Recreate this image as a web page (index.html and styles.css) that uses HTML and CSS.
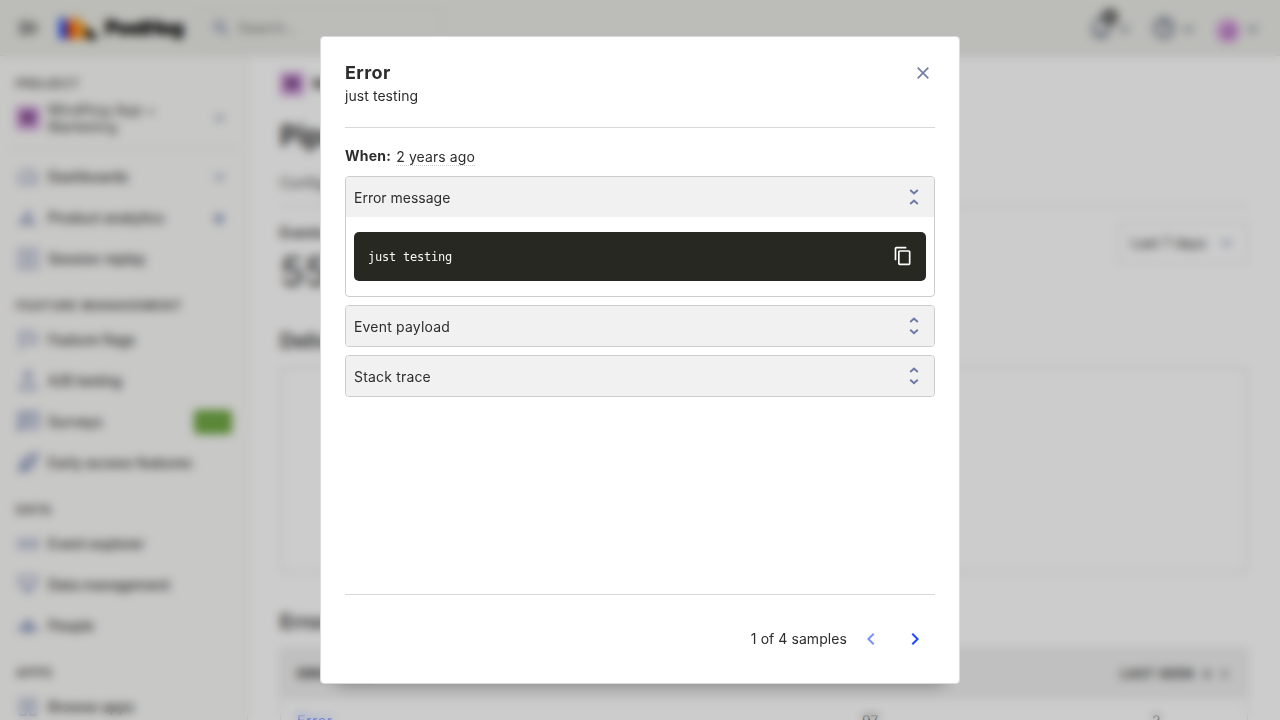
FILE: index.html
```html
<!DOCTYPE html>
<html lang="en">
<head>
<meta charset="utf-8">
<title>PostHog</title>
<link rel="stylesheet" href="styles.css">
</head>
<body>
<div class="app">
  <header class="topbar">
    <svg class="menu" width="20" height="20" viewBox="0 0 20 20"><path d="M1 5h13M1 10h13M1 15h13M19 6l-4 4 4 4" stroke="#2d2d2d" stroke-width="2" fill="none"/></svg>
    <svg class="hog" width="40" height="22" viewBox="0 0 40 22"><path d="M0 0l8 8v14H0z" fill="#1d4aff"/><path d="M0 0h8v22H3z" fill="#1d4aff" opacity=".5"/><path d="M8 0l8 8v14H8z" fill="#f54e00"/><path d="M14 0h4l10 10v12H16z" fill="#f9a02b"/><path d="M27 9l12 11v2H27z" fill="#111"/></svg>
    <span class="brand">PostHog</span>
    <div class="search"><svg width="18" height="18" viewBox="0 0 18 18" fill="none" stroke="#6b7aa8" stroke-width="2"><circle cx="7" cy="7" r="4.5"/><path d="M10.5 10.5L16 16"/></svg><span>Search…</span></div>
    <div class="tools">
      <div class="tool bell"><svg width="24" height="24" viewBox="0 0 24 24" fill="none" stroke="#5a6480" stroke-width="2.4"><path d="M3 18h18M5 18v-8a7 7 0 0114 0v8M9 21h6"/></svg><b class="count">4</b><i class="caret"></i></div>
      <div class="tool"><svg width="24" height="24" viewBox="0 0 24 24" fill="none" stroke="#5a6480" stroke-width="2.4"><circle cx="12" cy="12" r="9.5"/><path d="M9 9a3 3 0 116 1c0 2-3 2-3 4M12 16v2"/></svg><i class="caret"></i></div>
      <div class="tool"><span class="avatar">J</span><i class="caret"></i></div>
    </div>
  </header>
  <div class="body">
    <nav class="side">
      <div class="group first">PROJECT</div>
      <div class="item project"><span class="tile">M</span><span>MindHog App + Marketing</span><i class="caret"></i></div>
      <div class="rule"></div>
      <div class="item"><svg viewBox="0 0 24 24"><path d="M4 18a9 9 0 1116 0zM12 15l3-5"/></svg><span>Dashboards</span><i class="caret"></i></div>
      <div class="item"><svg viewBox="0 0 24 24"><path d="M6 19v-6M12 19V5M18 19v-4" stroke-width="4"/></svg><span>Product analytics</span><i class="plus">+</i></div>
      <div class="item"><svg viewBox="0 0 24 24"><path d="M3 3h18v18H3zM10 8l6 4-6 4z"/></svg><span>Session replay</span></div>
      <div class="group">FEATURE MANAGEMENT</div>
      <div class="item"><svg viewBox="0 0 24 24"><path d="M5 22V4h8l1 2h6v9h-7l-1-2H5"/></svg><span>Feature flags</span></div>
      <div class="item"><svg viewBox="0 0 24 24"><path d="M8 3h8M10 3v7L4 20h16l-6-10V3"/></svg><span>A/B testing</span></div>
      <div class="item"><svg viewBox="0 0 24 24"><path d="M3 20V3h19v14H6zM7 8h10M7 12h7" stroke-width="2.4"/></svg><span>Surveys</span><b class="new">NEW</b></div>
      <div class="item"><svg viewBox="0 0 24 24"><path d="M4 20l2-9 6-5 9-3-3 9-5 6zM7 17l8-8" stroke-width="2.6"/></svg><span>Early access features</span></div>
      <div class="group">DATA</div>
      <div class="item"><svg viewBox="0 0 24 24"><path d="M2 8h5v8H2zM10 8h5v8h-5zM18 8h4v8h-4z" stroke-width="1.3"/></svg><span>Event explorer</span></div>
      <div class="item"><svg viewBox="0 0 24 24"><path d="M3 4h18l-2 10H5zM8 14l4 6 4-6z"/></svg><span>Data management</span></div>
      <div class="item"><svg viewBox="0 0 24 24"><path d="M8 17a4 4 0 018 0zM2 17a4 4 0 016-3M22 17a4 4 0 00-6-3M10 9a2 2 0 104 0 2 2 0 10-4 0" stroke-width="2.6"/></svg><span>People</span></div>
      <div class="group">APPS</div>
      <div class="item"><svg viewBox="0 0 24 24"><path d="M4 4h6v6H4zM14 4h6v6h-6zM4 14h6v6H4zM14 14h6v6h-6z" stroke-width="1.3"/></svg><span>Browse apps</span></div>
    </nav>
    <main class="main">
      <div class="crumbs"><span class="tile">M</span><span>MindHog App + Marketing</span></div>
      <h1 class="title">Pipeline</h1>
      <div class="tabs">Configuration</div>
      <div class="stats">
        <div><div class="label">Events</div><div class="big">556</div></div>
        <div class="select">Last 7 days<i class="caret"></i></div>
      </div>
      <h2 class="section">Delivery trends</h2>
      <div class="chart"></div>
      <h2 class="section errors">Errors</h2>
      <div class="table">
        <div class="row head"><span>ERROR TYPE</span><span></span><span class="seen">LAST SEEN &nbsp;↓ &nbsp;≡</span></div>
        <div class="row"><span class="link">Error</span><span class="num">97</span><span class="zero">2</span></div>
      </div>
    </main>
  </div>
</div>

<div class="overlay">
  <section class="modal">
    <div class="modal-head">
      <div><h3>Error</h3><p>just testing</p></div>
      <svg class="close" width="24" height="24" viewBox="0 0 24 24"><path d="M6.7 6.7l10.6 10.6M17.3 6.7L6.7 17.3" stroke="#747ea4" stroke-width="1.7" fill="none"/></svg>
    </div>
    <div class="modal-body">
      <div class="when"><strong>When:</strong><span>2 years ago</span></div>
      <div class="panel">
        <div class="panel-head">Error message<svg class="fold" viewBox="0 0 24 24"><path d="M8.2 4.9l3.8 3.5 3.8-3.5M8.2 19.1l3.8-3.5 3.8 3.5"/></svg></div>
        <div class="panel-body"><div class="code"><code>just testing</code><svg width="20" height="20" viewBox="0 0 24 24"><path d="M16 1H4c-1.1 0-2 .9-2 2v14h2V3h12V1zm3 4H8c-1.1 0-2 .9-2 2v14c0 1.1.9 2 2 2h11c1.1 0 2-.9 2-2V7c0-1.1-.9-2-2-2zm0 16H8V7h11v14z" fill="#fff"/></svg></div></div>
      </div>
      <div class="panel"><div class="panel-head spaced">Event payload<svg class="fold" viewBox="0 0 24 24"><path d="M8.2 8.1l3.8-3.5 3.8 3.5M8.2 15.7l3.8 3.5 3.8-3.5"/></svg></div></div>
      <div class="panel"><div class="panel-head spaced">Stack trace<svg class="fold" viewBox="0 0 24 24"><path d="M8.2 8.1l3.8-3.5 3.8 3.5M8.2 15.7l3.8 3.5 3.8-3.5"/></svg></div></div>
    </div>
    <div class="modal-foot">
      <span>1 of 4 samples</span>
      <svg class="prev" width="24" height="24" viewBox="0 0 24 24"><path d="M15.41 7.41L14 6l-6 6 6 6 1.41-1.41L10.83 12z"/></svg>
      <svg class="next" width="24" height="24" viewBox="0 0 24 24"><path d="M8.59 16.59L10 18l6-6-6-6-1.41 1.41L13.17 12z"/></svg>
    </div>
  </section>
</div>
</body>
</html>
```

FILE: styles.css
```css
* { box-sizing: border-box; }
body { margin: 0; width: 1280px; height: 720px; overflow: hidden; font: 14px/20px Inter, sans-serif; color: #2d2d2d; background: #fff; }
h1, h2, h3, p { margin: 0; }
.app { height: 720px; overflow: hidden; }

.topbar { height: 56px; display: flex; align-items: center; padding: 0 16px; background: #ebece6; border-bottom: 1px solid #d9d9d9; }
.menu { margin: 0 22px 0 2px; }
.brand { font-weight: 900; font-size: 20px; letter-spacing: -1.1px; color: #000; margin-left: 6px; width: 81px; }
.hog { margin-left: -1px; }
.search { margin-left: 13px; width: 242px; height: 40px; display: flex; align-items: center; gap: 8px; padding: 0 12px; border: 1px solid #dcddd8; border-radius: 4px; color: #777; font-size: 14px; }
.tools { margin-left: auto; display: flex; gap: 20px; margin-right: 4px; }
.tool { position: relative; display: flex; align-items: center; gap: 5px; }
.tools .tool + .tool { gap: 5px; }
.tool.bell { gap: 4px; }
.caret { width: 7px; height: 7px; border: solid #6675a5; border-width: 0 2px 2px 0; transform: rotate(45deg); margin: -4px 4px 0; flex: none; }
.topbar .caret { border-color: #525c78; margin-top: 0; }
.count { position: absolute; left: 13px; top: -4px; width: 16px; height: 16px; border-radius: 8px; background: #444; color: #fff; font-size: 10px; line-height: 16px; text-align: center; }
.avatar { width: 24px; height: 24px; border-radius: 12px; background: #d69fdd; color: #7a3588; font-weight: 700; text-align: center; line-height: 24px; margin-top: 6px; }
.tile { width: 24px; height: 24px; flex: none; border-radius: 3px; background: #cf9ed8; color: #5a2468; text-align: center; font-weight: 800; line-height: 24px; }

.body { display: flex; height: 664px; overflow: hidden; }
.side { width: 248px; flex: none; padding: 13px 8px 0; background: #fafaf8; border-right: 1px solid #e2e2e2; display: flex; flex-direction: column; gap: 1px; height: 700px; }
.group { height: 39px; flex: none; padding: 16px 8px 0; font-size: 12px; font-weight: 700; letter-spacing: 1.1px; color: #505050; }
.group.first { height: 26px; padding-top: 5px; }
.item { height: 40px; flex: none; display: flex; align-items: center; gap: 8px; padding: 0 12px 0 8px; font-weight: 500; font-size: 14px; color: #333; }
.item.project { height: 44px; line-height: 17px; font-weight: 400; letter-spacing: .3px; }
.item > span:nth-child(2) { flex: 1; white-space: nowrap; }
.item.project > span:nth-child(2) { white-space: normal; padding-right: 36px; }
.item > svg { width: 24px; height: 24px; flex: none; fill: none; stroke: #7886b2; stroke-width: 1.8; }
.rule { height: 1px; flex: none; background: #e0e0e0; margin: 7px 0; }
.plus { width: 20px; text-align: center; font: 700 22px/20px Inter, sans-serif; color: #6072a8; margin: -3px -2px 0 0; }
.new { width: 38px; height: 24px; border-radius: 4px; background: #6aa53d; color: #7fb257; font-size: 12px; line-height: 24px; text-align: center; margin: -1px -5px 0 0; }

.main { flex: 1; padding: 16px 32px 0; }
.crumbs { height: 24px; display: flex; gap: 8px; align-items: center; font-weight: 600; }
.title { font-size: 28px; line-height: 36px; margin-top: 22px; font-weight: 700; }
.tabs { height: 45px; margin-top: 7px; padding-top: 12px; border-bottom: 1px solid #d9d9d9; color: #444; }
.stats { display: flex; justify-content: space-between; margin-top: 16px; height: 73px; }
.label { font-weight: 600; line-height: 22px; }
.big { font-size: 40px; line-height: 56px; font-weight: 400; }
.select { width: 130px; height: 42px; display: flex; align-items: center; justify-content: space-between; padding: 0 13px 0 12px; border: 1px solid #d9d9d9; border-radius: 4px; }
.section { font-size: 20px; line-height: 28px; font-weight: 600; margin-top: 32px; }
.chart { height: 206px; margin-top: 12px; border: 1px solid #d9d9d9; border-radius: 4px; }
.section.errors { margin-top: 35px; }
.table { margin-top: 12px; border: 1px solid #d9d9d9; }
.row { height: 44px; display: flex; align-items: center; padding: 0 16px; font-size: 14px; }
.row span { flex: 1; }
.row.head { height: 50px; background: #f0f0f0; font-weight: 700; font-size: 12px; }
.row .seen { text-align: right; letter-spacing: .9px; padding-right: 2px; }
.row .link { color: #1d4aff; flex: 0 0 565px; letter-spacing: .6px; }
.row .num { flex: 0 0 290px; }
.row .zero { flex: 0 0 60px; }

.overlay { position: fixed; inset: 0; display: flex; align-items: center; justify-content: center; background: rgba(0, 0, 0, .2); backdrop-filter: blur(5px); }
.modal { width: 640px; height: 648px; display: flex; flex-direction: column; padding: 24px; background: #fff; border: 1px solid #d9d9d9; border-radius: 4px; box-shadow: 0 16px 16px -16px rgba(0, 0, 0, .35); }
.modal-head { height: 67px; flex: none; display: flex; justify-content: space-between; border-bottom: 1px solid #d9d9d9; }
.modal-head h3 { font-size: 18px; line-height: 24px; font-weight: 700; letter-spacing: .4px; }
.modal-head p { line-height: 22px; letter-spacing: .06px; }
.modal-body { flex: 1; padding-top: 16px; }
.when { height: 32px; display: flex; align-items: flex-start; gap: 5px; }
.when strong { line-height: 24px; font-weight: 700; letter-spacing: .25px; }
.when span { line-height: 20px; margin-top: 3px; height: 19px; border-bottom: 1px dotted #ccc; letter-spacing: .1px; }
.panel { border: 1px solid #ccc; border-radius: 4px; margin-bottom: 8px; overflow: hidden; }
.panel-head { height: 40px; display: flex; align-items: center; justify-content: space-between; padding: 1px 8px 0; background: #f1f1f1; }
.panel-head.spaced { letter-spacing: .18px; }
.fold { width: 24px; height: 24px; fill: none; stroke: #6d7aa8; stroke-width: 2; margin-top: -1px; }
.panel-body { padding: 15px 8px; }
.code { height: 49px; display: flex; align-items: center; justify-content: space-between; padding: 0 13px 1px 14px; border-radius: 5px; background: #272822; }
.code code { font: 12px/20px "DejaVu Sans Mono", monospace; letter-spacing: -.22px; color: #f8f8f2; margin-top: 1px; }
.modal-foot { height: 65px; flex: none; display: flex; align-items: center; justify-content: flex-end; gap: 12px; padding: 23px 8px 0 0; border-top: 1px solid #d9d9d9; letter-spacing: .07px; }
.modal-foot svg { fill: #1d4aff; }
.prev { opacity: .6; }
.next { margin-left: 8px; }
```
